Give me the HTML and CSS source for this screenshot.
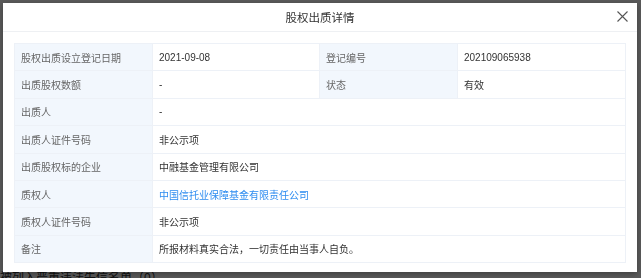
FILE: index.html
```html
<!DOCTYPE html>
<html lang="zh">
<head>
    <meta charset="UTF-8">
    <meta name="viewport" content="width=device-width, initial-scale=1.0">
    <title>股权出质详情</title>
    <link rel="stylesheet" href="styles.css">
</head>
<body>
    <!-- 背景页面 -->
    <div class="page">
        <p class="page-line">被列入严重违法失信名单（0）</p>
    </div>
    <div class="mask"></div>

    <div class="modal">
        <div class="modal-header">
            <span class="modal-title">股权出质详情</span>
            <span class="modal-close">
                <svg width="11" height="11" viewBox="0 0 11 11">
                    <path d="M0.5 0.5 L10.5 10.5 M10.5 0.5 L0.5 10.5" stroke="#555" stroke-width="1.1" fill="none"/>
                </svg>
            </span>
        </div>
        <div class="modal-body">
            <table class="detail-table">
                <tr>
                    <td class="label">股权出质设立登记日期</td>
                    <td class="value">2021-09-08</td>
                    <td class="label">登记编号</td>
                    <td class="value">202109065938</td>
                </tr>
                <tr>
                    <td class="label">出质股权数额</td>
                    <td class="value">-</td>
                    <td class="label">状态</td>
                    <td class="value">有效</td>
                </tr>
                <tr>
                    <td class="label">出质人</td>
                    <td class="value" colspan="3">-</td>
                </tr>
                <tr>
                    <td class="label">出质人证件号码</td>
                    <td class="value" colspan="3">非公示项</td>
                </tr>
                <tr>
                    <td class="label">出质股权标的企业</td>
                    <td class="value" colspan="3">中融基金管理有限公司</td>
                </tr>
                <tr>
                    <td class="label">质权人</td>
                    <td class="value" colspan="3"><a class="link" href="#">中国信托业保障基金有限责任公司</a></td>
                </tr>
                <tr>
                    <td class="label">质权人证件号码</td>
                    <td class="value" colspan="3">非公示项</td>
                </tr>
                <tr>
                    <td class="label">备注</td>
                    <td class="value" colspan="3">所报材料真实合法，一切责任由当事人自负。</td>
                </tr>
            </table>
        </div>
    </div>
</body>
</html>
```

FILE: styles.css
```css
body {
    margin: 0;
    padding: 0;
    font-family: Arial, "Liberation Sans", "Noto Sans CJK SC", sans-serif;
    background-color: #ffffff;
    width: 641px;
    height: 278px;
    overflow: hidden;
}
.page {
    height: 278px;
    display: flex;
    flex-direction: column;
    justify-content: flex-end;
}
.page-line {
    margin: 0 0 -8px 0;
    font-size: 12px;
    line-height: 16px;
    color: #333;
}
.mask {
    position: fixed;
    top: 0;
    left: 0;
    right: 0;
    bottom: 0;
    background-color: rgba(0, 0, 0, 0.65);
}
.modal {
    position: fixed;
    top: 3px;
    left: 3px;
    width: 634px;
    height: 269px;
    background-color: #fff;
    box-shadow: 0 2px 6px rgba(0, 0, 0, 0.3);
    display: flex;
    flex-direction: column;
}
.modal-header {
    height: 28px;
    border-bottom: 1px solid #eef0f3;
    display: flex;
    align-items: center;
    justify-content: center;
    position: relative;
}
.modal-title {
    font-size: 11.5px;
    color: #333;
}
.modal-close {
    position: absolute;
    right: 9px;
    top: 8px;
    width: 11px;
    height: 11px;
    display: flex;
}
.modal-body {
    padding: 11px 11px 0 11px;
}
.detail-table {
    width: 612px;
    border-collapse: collapse;
    table-layout: fixed;
    font-size: 10px;
}
.detail-table td {
    height: 26.4px;
    padding: 0 6px;
    border: 1px solid #edf1f7;
    white-space: nowrap;
}
.detail-table tr td:nth-child(1) {
    width: 125px;
}
.detail-table tr td:nth-child(2) {
    width: 154px;
}
.detail-table tr td:nth-child(3) {
    width: 125px;
}
.label {
    background-color: #f2f7fd;
    color: #666;
    padding-left: 7px;
}
.value {
    background-color: #fff;
    color: #333;
}
.link {
    color: #2d8cf0;
    text-decoration: none;
}
```
